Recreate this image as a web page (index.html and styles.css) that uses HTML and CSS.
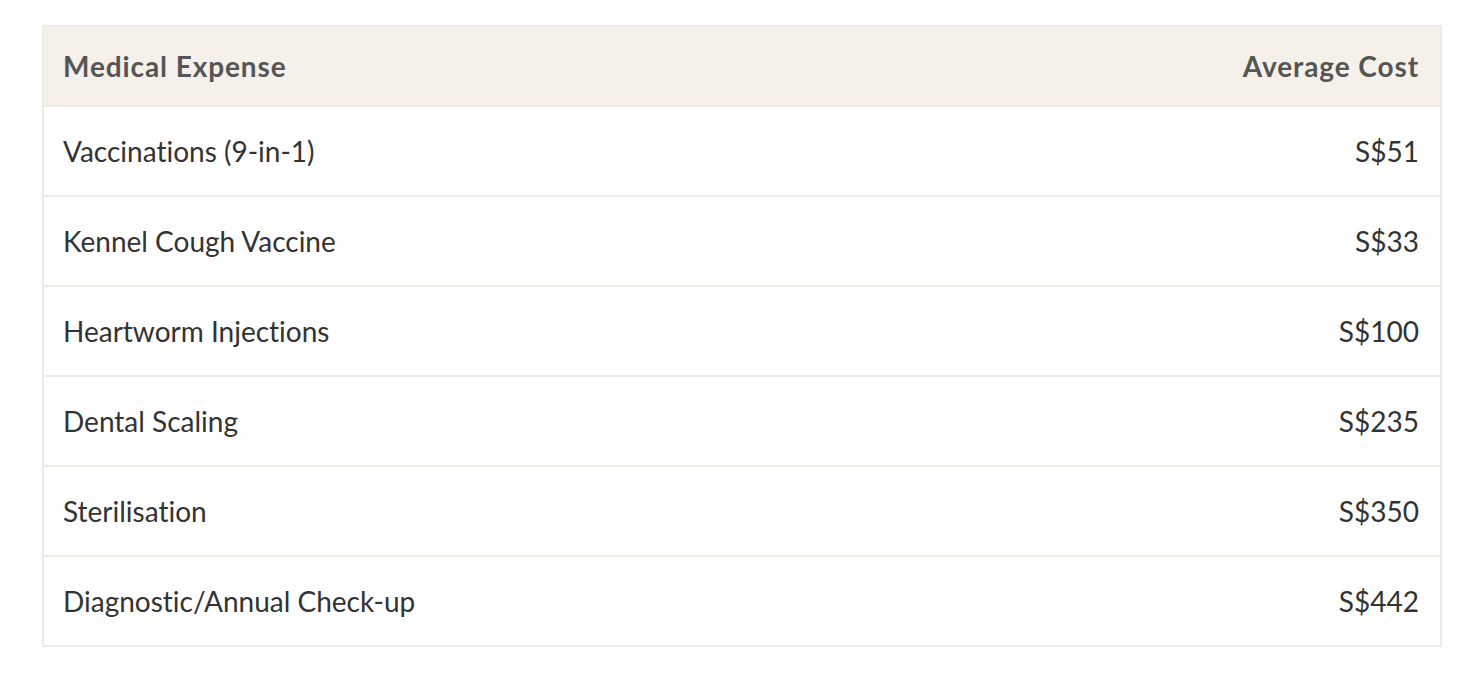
FILE: index.html
```html
<!DOCTYPE html>
<html lang="en">
<head>
<meta charset="utf-8">
<title>Medical Expenses</title>
<link rel="stylesheet" href="styles.css">
</head>
<body>
<div class="wrap">
<table class="cost-table">
  <thead>
    <tr><th class="name">Medical Expense</th><th class="cost">Average Cost</th></tr>
  </thead>
  <tbody>
    <tr><td class="name">Vaccinations (9-in-1)</td><td class="cost">S$51</td></tr>
    <tr><td class="name">Kennel Cough Vaccine</td><td class="cost">S$33</td></tr>
    <tr><td class="name">Heartworm Injections</td><td class="cost">S$100</td></tr>
    <tr><td class="name">Dental Scaling</td><td class="cost">S$235</td></tr>
    <tr><td class="name">Sterilisation</td><td class="cost">S$350</td></tr>
    <tr><td class="name">Diagnostic/Annual Check-up</td><td class="cost">S$442</td></tr>
  </tbody>
</table>
</div>
</body>
</html>
```
FILE: styles.css
```css
html, body { margin: 0; padding: 0; background: #fff; }
body { font-family: "Lato", "Noto Sans", sans-serif; font-variant-ligatures: none; }
.wrap { padding: 25px 0 0 42px; }
.cost-table {
  width: 1400px;
  border-collapse: collapse;
  border: 2px solid #eeebe4;
  font-size: 28px;
  color: #333;
}
.cost-table th {
  background: #f5f1ea;
  color: #555;
  font-weight: 700;
  letter-spacing: 0.9px;
  height: 78px;
  padding: 0 21px 0 19px;
  text-align: left;
}
.cost-table td {
  height: 88px;
  padding: 0 21px 0 19px;
  border-top: 2px solid #eeebe4;
  vertical-align: middle;
}
.cost-table .cost { text-align: right; }
```
